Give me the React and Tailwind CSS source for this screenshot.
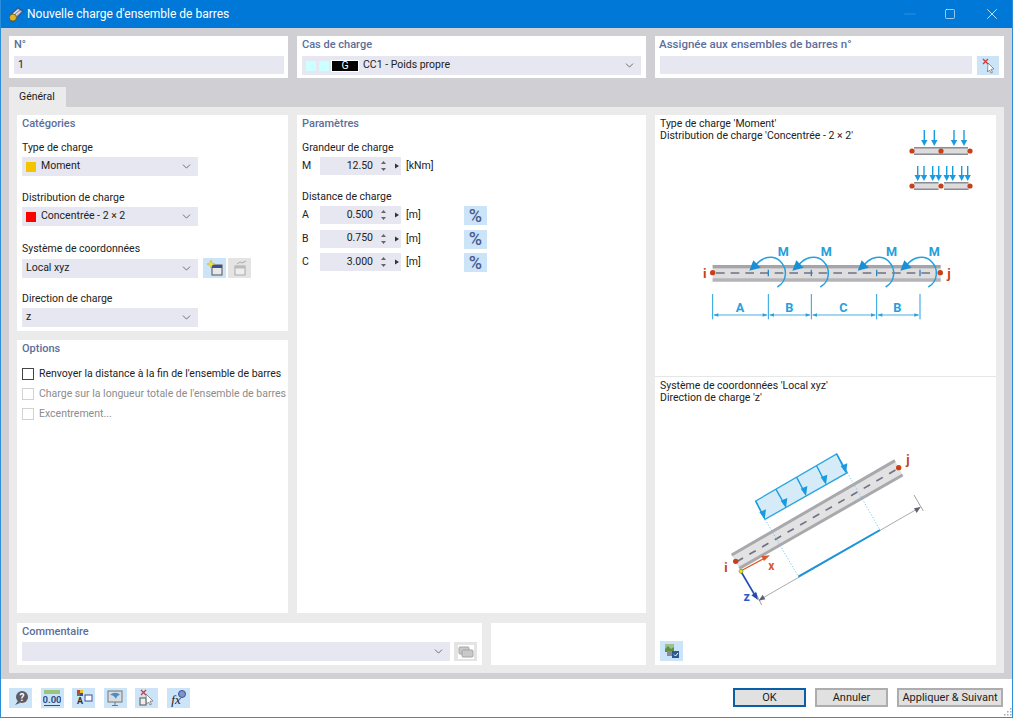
import React from "react";
import { ChevronDown, Minus, Square, X } from "lucide-react";

const Caption = ({ children }) => (
  <div className="h-[17px] leading-[17px] text-[11px] font-medium text-[#5b6e9c]">{children}</div>
);

const Field = ({ label, children, className = "" }) => (
  <div className={className}>
    <div className="h-[18px] leading-[18px] text-[#222]">{label}</div>
    {children}
  </div>
);

const Select = ({ swatch, children, className = "w-[176px]" }) => (
  <div className={`h-[19px] bg-[#e6e7f0] flex items-center pl-[4px] pr-[5px] ${className}`}>
    {swatch && <span className={`w-[10px] h-[10px] mr-[5px] ${swatch}`} />}
    <span className="flex-1 leading-none text-[#222] flex items-center">{children}</span>
    <ChevronDown size={13} strokeWidth={1.5} className="text-[#555]" />
  </div>
);

const Spin = ({ name, value, unit, percent }) => (
  <div className="h-[18px] flex items-start">
    <span className="w-[18px] h-[18px] leading-[18px] text-[#222]">{name}</span>
    <div className="w-[81px] h-[18px] bg-[#e6e7f0] flex items-center">
      <span className="w-[53px] text-right text-[#222]">{value}</span>
      <svg width="28" height="18" viewBox="3 0 28 18" className="shrink-0">
        <path d="M13.500 4 16 7h-5zM11 11h5l-2.500 3z" fill="#666" />
        <path d="M25 6.500 29 9l-4 2.500z" fill="#333" />
      </svg>
    </div>
    <span className="ml-[5px] w-[58px] h-[18px] leading-[18px] text-[#222]">{unit}</span>
    {percent && (
      <div className="w-[23px] h-[19px] bg-[#cce4f7] flex items-center justify-center text-[18px] font-medium text-[#4a5a95]">
        %
      </div>
    )}
  </div>
);

const Check = ({ children, off }) => (
  <div className="h-[20px] flex items-center whitespace-nowrap">
    <span className={`w-[12px] h-[12px] shrink-0 border bg-white mr-[5px] ${off ? "border-[#d2d2d2]" : "border-[#444]"}`} />
    <span className={off ? "text-[#8c8c8c]" : "text-[#222]"}>{children}</span>
  </div>
);

const Tool = ({ children, className = "w-[23px] h-[20px] bg-[#cce4f7]" }) => (
  <div className={`flex items-center justify-center shrink-0 ${className}`}>
    <svg width="18" height="18" viewBox="0 0 18 18">{children}</svg>
  </div>
);

const PressButton = ({ children, className = "border-[#adadad]" }) => (
  <div className={`h-[19px] flex items-center justify-center whitespace-nowrap text-[11px] bg-[#e1e1e1] border-2 text-[#222] ${className}`}>
    {children}
  </div>
);

const Arrow = ({ x, y1, y2 }) => (
  <>
    <line x1={x} y1={y1} x2={x} y2={y2 - 4} stroke="#1a9ae0" strokeWidth="1.400" />
    <path d={`M${x - 3.200} ${y2 - 6}h6.400l-3.200 6z`} fill="#1a9ae0" />
  </>
);

const MiniBar = ({ x, y, w }) => (
  <>
    <rect x={x} y={y} width={w} height="8" fill="#dcdcdc" />
    <rect x={x} y={y} width={w} height="1.500" fill="#8b8b94" />
    <rect x={x} y={y + 6.500} width={w} height="1.500" fill="#8b8b94" />
  </>
);

const MiniSchemes = () => (
  <svg width="75" height="70" viewBox="255 125 75 70" className="mt-[10px] mr-[16px] shrink-0">
    {[274.3, 284.3, 304, 314].map((x) => (
      <Arrow key={x} x={x} y1={130} y2={146} />
    ))}
    <MiniBar x={264} y={147} w={54} />
    {[262, 291, 320].map((x) => (
      <circle key={x} cx={x} cy={151} r="2.600" fill="#c8401a" />
    ))}
    {[267.7, 274, 282.7, 288.7, 296.7, 302.7, 311.7, 317.7].map((x) => (
      <Arrow key={x} x={x} y1={166} y2={181} />
    ))}
    <MiniBar x={264} y={182} w={24.500} />
    <MiniBar x={294} y={182} w={24.500} />
    {[262, 291, 320].map((x) => (
      <circle key={x} cx={x} cy={186} r="2.600" fill="#c8401a" />
    ))}
  </svg>
);

const BLUE = "#23a0dd";

const BeamMoment = () => {
  const arcs = [0, 129, 325, 453];
  const ticks = [235, 364, 560, 690];
  const dims = [68, 235, 364, 560, 690];
  return (
    <svg width="280" height="110" viewBox="0 0 840 330" className="ml-[35px] mt-[30px]">
      <rect x="68" y="120" width="684" height="50" fill="#dedede" />
      <rect x="68" y="120" width="684" height="10" fill="#a4a4aa" />
      <rect x="68" y="160" width="684" height="10" fill="#b4b4b8" />
      <line x1="78" y1="144" x2="742" y2="144" stroke="#6f7188" strokeWidth="5" strokeDasharray="26 18" />
      {ticks.map((x) => (
        <line key={x} x1={x} y1="134" x2={x} y2="154" stroke="#2a87c8" strokeWidth="4" />
      ))}
      <circle cx="68" cy="143" r="8" fill="#c8401a" />
      <circle cx="751" cy="143" r="8" fill="#c8401a" />
      <text x="44" y="158" textAnchor="middle" fontSize="40" fontWeight="700" fill="#c8401a">i</text>
      <text x="777" y="158" textAnchor="middle" fontSize="40" fontWeight="700" fill="#c8401a">j</text>
      {arcs.map((dx) => (
        <g key={dx} transform={`translate(${dx} 0)`}>
          <path d="M196 122C215 96 250 88 270 108C295 132 290 170 262 186" fill="none" stroke={BLUE} strokeWidth="4.500" />
          <path d="M178 137 190 106 212 128z" fill="#1a8fd6" />
          <text x="280" y="93" textAnchor="middle" fontSize="38" fontWeight="700" fill={BLUE}>M</text>
        </g>
      ))}
      {dims.map((x) => (
        <line key={x} x1={x} y1="207" x2={x} y2="283" stroke={BLUE} strokeWidth="3" />
      ))}
      {dims.slice(0, -1).map((x, i) => (
        <g key={x}>
          <line x1={x + 4} y1="270" x2={dims[i + 1] - 4} y2="270" stroke={BLUE} strokeWidth="2.500" />
          <path d={`M${x + 3} 270l14-5v10z`} fill={BLUE} />
          <path d={`M${dims[i + 1] - 3} 270l-14-5v10z`} fill={BLUE} />
        </g>
      ))}
      {[["A", 150], ["B", 298], ["C", 460], ["B", 622]].map(([t, x]) => (
        <text key={x} x={x} y="262" textAnchor="middle" fontSize="38" fontWeight="700" fill={BLUE}>{t}</text>
      ))}
    </svg>
  );
};

const BeamLocal = () => {
  const arrows = [
    [410, 42, 438, 100],
    [350, 78, 378, 134],
    [290, 112, 318, 168],
    [228, 148, 258, 204],
    [167, 183, 194, 238],
  ];
  return (
    <svg width="240" height="180" viewBox="0 0 720 540" className="ml-[45px] mt-[36px] shrink-0">
      <polygon points="167,183 410,42 442,98 195,238" fill="#d5ebf8" stroke="#29a5e0" strokeWidth="4" />
      {arrows.map(([x1, y1, x2, y2]) => (
        <g key={x1}>
          <line x1={x1} y1={y1} x2={x2 - 4} y2={y2 - 10} stroke="#1a9ae0" strokeWidth="4" />
          <path d={`M${x2} ${y2}l-16-22 20-8z`} fill="#1a9ae0" />
        </g>
      ))}
      <polygon points="95,345 585,62 608,105 118,385" fill="#e2e2e2" />
      <line x1="95" y1="345" x2="585" y2="62" stroke="#a9a9ad" strokeWidth="9" />
      <line x1="118" y1="385" x2="608" y2="105" stroke="#a9a9ad" strokeWidth="9" />
      <line x1="110" y1="365" x2="590" y2="88" stroke="#6f7188" strokeWidth="5" strokeDasharray="22 22" />
      <line x1="195" y1="238" x2="295" y2="410" stroke="#6cc0ea" strokeWidth="2.500" strokeDasharray="4 5" />
      <line x1="442" y1="98" x2="540" y2="270" stroke="#6cc0ea" strokeWidth="2.500" strokeDasharray="4 5" />
      <line x1="178" y1="480" x2="660" y2="202" stroke="#aaaaae" strokeWidth="3" />
      <line x1="295" y1="410" x2="540" y2="270" stroke="#1a94da" strokeWidth="6" />
      <line x1="165" y1="455" x2="185" y2="495" stroke="#a0a0a5" strokeWidth="3" />
      <line x1="642" y1="165" x2="670" y2="213" stroke="#a0a0a5" strokeWidth="3" />
      <path d="M176 482l20-4-8-14zM662 201l-20 4 8 14z" fill="#5f6072" />
      <circle cx="107" cy="364" r="8" fill="#c8401a" />
      <circle cx="596" cy="83" r="8" fill="#c8401a" />
      <line x1="122" y1="393" x2="195" y2="354" stroke="#d9582b" strokeWidth="4" />
      <path d="M210 346l-26 2 8 15z" fill="#d9582b" />
      <line x1="122" y1="393" x2="165" y2="466" stroke="#2247b8" strokeWidth="5" />
      <path d="M174 480l-20-14 15-9z" fill="#2247b8" />
      <circle cx="123" cy="394" r="6" fill="#e8e21e" stroke="#6b9c22" strokeWidth="2" />
      <text x="78" y="396" textAnchor="middle" fontSize="38" fontWeight="700" fill="#c8401a">i</text>
      <text x="624" y="72" textAnchor="middle" fontSize="38" fontWeight="700" fill="#c8401a">j</text>
      <text x="214" y="390" textAnchor="middle" fontSize="36" fontWeight="700" fill="#d9582b">x</text>
      <text x="140" y="482" textAnchor="middle" fontSize="38" fontWeight="700" fill="#2f5bc8">z</text>
    </svg>
  );
};

export default function App() {
  return (
    <div
      className="w-[1013px] h-[718px] flex flex-col bg-white border border-t-0 border-[#2b8edb] overflow-hidden text-[10.500px] leading-none"
      style={{ fontFamily: 'Roboto, "Noto Sans", sans-serif' }}
    >
      {/* barre de titre */}
      <div className="h-[28px] shrink-0 bg-[#0078d7] flex items-center text-white">
        <svg width="16" height="16" viewBox="0 0 18 18" className="ml-[7px] mr-[3px]">
          <path d="M3 10 11 2l6 4-8 8z" fill="#8d97b5" stroke="#2f3a60" strokeWidth="1" />
          <path d="M6 9l6-5M8 11l6-5" stroke="#e6e9f2" strokeWidth="1.200" />
          <circle cx="5.500" cy="13" r="4" fill="#e3b32a" stroke="#5a4a10" strokeWidth="0.800" />
        </svg>
        <span className="text-[12px] flex-1">Nouvelle charge d'ensemble de barres</span>
        <Minus size={18} strokeWidth={1} className="text-[#3f9ae3] mr-[25.500px]" />
        <Square size={12} strokeWidth={1.200} className="mr-[26.500px]" />
        <X size={18} strokeWidth={1} className="mr-[11.500px]" />
      </div>

      <div className="h-[651px] shrink-0 bg-[#d0d0d4] px-[8px] pt-[8px]">
        {/* ligne du haut */}
        <div className="flex gap-[9px] h-[42px]">
          <div className="w-[279px] bg-white pl-[5px] pr-[4px]">
            <Caption>N°</Caption>
            <div className="h-[18px] mt-[3px] bg-[#e6e7f0] flex items-center pl-[4px] text-[#222]">1</div>
          </div>
          <div className="w-[349px] bg-white px-[5px]">
            <Caption>Cas de charge</Caption>
            <div className="h-[19px] mt-[3px] bg-[#e6e7f0] flex items-center pl-[4px] pr-[5px]">
              <span className="w-[10px] h-[10px] bg-[#ccffff]" />
              <span className="w-[10px] h-[10px] bg-[#ccffff] ml-[3px]" />
              <span className="w-[28px] h-[12px] bg-black border border-white text-white text-center leading-[10px] ml-[2px]">G</span>
              <span className="flex-1 ml-[4px] text-[#222]">CC1 - Poids propre</span>
              <ChevronDown size={13} strokeWidth={1.500} className="text-[#555]" />
            </div>
          </div>
          <div className="w-[349px] bg-white pl-[4px] pr-[5px]">
            <Caption><span className="text-[11.500px]">Assignée aux ensembles de barres n°</span></Caption>
            <div className="flex mt-[3px] gap-[5px] pl-[1px]">
              <div className="w-[312px] h-[18px] bg-[#e6e7f0]" />
              <Tool className="w-[22px] h-[19px] bg-[#cce4f7]">
                <path d="M9 6l6 6-3 .3 1.500 3-1.500.7-1.500-3-2 2z" fill="#fff" stroke="#777" strokeWidth="0.800" />
                <path d="M4 2l5 5M9 2 4 7" stroke="#d23a3a" strokeWidth="1.300" />
              </Tool>
            </div>
          </div>
        </div>

        {/* onglet */}
        <div className="mt-[9px] w-[57px] h-[20px] bg-[#ebebeb] flex items-center pl-[10px] text-[#222]">Général</div>

        <div className="w-[995px] h-[566px] bg-[#ebebeb] p-[8px] flex gap-[9px]">
          <div className="w-[629px] flex flex-col">
            <div className="h-[498px] flex gap-[9px]">
              <div className="w-[271px] flex flex-col gap-[9px]">
                <div className="h-[216px] bg-white px-[5px]">
                  <Caption>Catégories</Caption>
                  <Field label="Type de charge" className="mt-[7px]">
                    <Select swatch="bg-[#f5c400]">Moment</Select>
                  </Field>
                  <Field label="Distribution de charge" className="mt-[13px]">
                    <Select swatch="bg-[#ff0000]">Concentrée - 2 × 2</Select>
                  </Field>
                  <Field label="Système de coordonnées" className="mt-[14px]">
                    <div className="flex items-center">
                      <Select>Local xyz</Select>
                      <Tool className="w-[23px] h-[20px] bg-[#cce4f7] ml-[5px]">
                        <rect x="6" y="6" width="10" height="10" fill="#e8e8e8" stroke="#555" strokeWidth="1" />
                        <rect x="6" y="6" width="10" height="3" fill="#3b4f9a" />
                        <path d="M5 1l1.200 2.800L9 5 6.200 6.200 5 9 3.800 6.200 1 5l2.800-1.200z" fill="#f4e23c" stroke="#b59c1a" strokeWidth="0.400" />
                      </Tool>
                      <Tool className="w-[23px] h-[20px] ml-[2px] bg-[#e4e4e4]">
                        <rect x="4" y="7" width="10" height="9" fill="#eee" stroke="#aaa" strokeWidth="1" />
                        <rect x="4" y="7" width="10" height="2.500" fill="#bbb" />
                        <path d="M6 5l3-2 2 1 4-2" stroke="#aaa" strokeWidth="1" fill="none" />
                      </Tool>
                    </div>
                  </Field>
                  <Field label="Direction de charge" className="mt-[12px]">
                    <Select>z</Select>
                  </Field>
                </div>
                <div className="flex-1 bg-white px-[5px]">
                  <Caption>Options</Caption>
                  <div className="mt-[7px]">
                    <Check>Renvoyer la distance à la fin de l'ensemble de barres</Check>
                    <Check off>Charge sur la longueur totale de l'ensemble de barres</Check>
                    <Check off>Excentrement...</Check>
                  </div>
                </div>
              </div>
              <div className="w-[349px] bg-white px-[5px]">
                <Caption>Paramètres</Caption>
                <Field label="Grandeur de charge" className="mt-[7px]">
                  <Spin name="M" value="12.50" unit="[kNm]" />
                </Field>
                <Field label="Distance de charge" className="mt-[13px]">
                  <div className="flex flex-col gap-[5.500px]">
                    <Spin name="A" value="0.500" unit="[m]" percent />
                    <Spin name="B" value="0.750" unit="[m]" percent />
                    <Spin name="C" value="3.000" unit="[m]" percent />
                  </div>
                </Field>
              </div>
            </div>
            <div className="mt-[10px] h-[42px] flex gap-[9px]">
              <div className="w-[465px] bg-white px-[5px]">
                <Caption>Commentaire</Caption>
                <div className="flex mt-[2px] gap-[4px]">
                  <Select className="flex-1" />
                  <div className="w-[23px] h-[19px] bg-[#e4e4e4] flex items-center justify-center">
                    <svg width="16" height="14" viewBox="0 0 16 14" className="bg-white">
                      <rect x="1" y="2" width="10" height="7" rx="1" fill="#c9c9c9" stroke="#a5a5a5" />
                      <rect x="4" y="5" width="11" height="7" rx="1" fill="#c9c9c9" stroke="#a5a5a5" />
                    </svg>
                  </div>
                </div>
              </div>
              <div className="w-[155px] bg-white" />
            </div>
          </div>

          {/* schémas */}
          <div className="w-[341px] bg-white flex flex-col">
            <div className="h-[262px] border-b border-[#e6e6e6]">
              <div className="flex justify-between h-[80px]">
                <div className="pl-[5px] pt-[3px] leading-[12px] text-[#222]">
                  <div>Type de charge 'Moment'</div>
                  <div>Distribution de charge 'Concentrée - 2 × 2'</div>
                </div>
                <MiniSchemes />
              </div>
              <BeamMoment />
            </div>
            <div className="flex-1 flex flex-col">
              <div className="pl-[5px] pt-[3px] leading-[12px] text-[#222]">
                <div>Système de coordonnées 'Local xyz'</div>
                <div>Direction de charge 'z'</div>
              </div>
              <BeamLocal />
              <Tool className="w-[23px] h-[20px] bg-[#cce4f7] ml-[5px] mt-auto mb-[4px]">
                <rect x="2" y="2" width="9" height="8" fill="#9fc08a" />
                <path d="M2 7l3-3 3 3 3-2v5H2z" fill="#5f8f3f" />
                <rect x="4" y="9" width="7" height="5" fill="#8a8a94" />
                <rect x="9" y="9" width="7" height="7" fill="#2e5a94" />
                <path d="M11 12.500l1.500 1.500 2.500-3" stroke="#fff" strokeWidth="1" fill="none" />
              </Tool>
            </div>
          </div>
        </div>
      </div>

      {/* barre du bas */}
      <div className="flex-1 relative flex items-start pt-[9px] pl-[8px]">
        <div className="flex gap-[8.600px]">
          <Tool>
            <circle cx="10" cy="8" r="6" fill="#5c5c66" />
            <path d="M6 12l-3 4 5-2z" fill="#5c5c66" />
            <text x="10" y="11.500" textAnchor="middle" fontSize="10" fontWeight="700" fill="#fff">?</text>
          </Tool>
          <Tool>
            <rect x="1" y="1" width="16" height="4" fill="#9cc27e" />
            <text x="9" y="14" textAnchor="middle" fontSize="9.500" fontWeight="700" fill="#2f4f86">0.00</text>
            <line x1="1" y1="16.500" x2="17" y2="16.500" stroke="#2f4f86" strokeWidth="1" />
          </Tool>
          <Tool>
            <rect x="2" y="1" width="3" height="3" fill="#d23a3a" />
            <rect x="5" y="1" width="3" height="3" fill="#e6c52a" />
            <rect x="2" y="4" width="3" height="3" fill="#3a8f3a" />
            <rect x="5" y="4" width="3" height="3" fill="#3b4f9a" />
            <text x="5" y="14.500" textAnchor="middle" fontSize="9" fontWeight="700" fill="#333">A</text>
            <rect x="10" y="6" width="7" height="6" fill="#fff" stroke="#3b4f9a" strokeWidth="1" />
          </Tool>
          <Tool>
            <rect x="2" y="2" width="14" height="11" fill="#d9dbe2" stroke="#777" strokeWidth="1" />
            <path d="M4 6c3-3 8-3 10 0-2 0-3 1-4 4-1-2-3-4-6-4z" fill="#4a8fc4" />
            <path d="M9 13v3M6 16.500h6" stroke="#777" strokeWidth="1" />
          </Tool>
          <Tool>
            <path d="M3 1l5 5M8 1 3 6" stroke="#d23a3a" strokeWidth="1.300" />
            <rect x="2" y="9" width="6" height="7" fill="#eee" stroke="#555" strokeWidth="1" />
            <path d="M8 5l7 7-3 .3 1.500 3-1.500.7-1.500-3-2 2z" fill="#fff" stroke="#777" strokeWidth="0.800" />
          </Tool>
          <Tool>
            <text x="7" y="15" textAnchor="middle" fontSize="13" fontStyle="italic" fontFamily="Liberation Serif, serif" fill="#222">fx</text>
            <circle cx="13" cy="5" r="3.500" fill="#7f93c9" stroke="#3b4f9a" strokeWidth="1" />
          </Tool>
        </div>
        <div className="ml-auto mr-[9px] flex gap-[9px]">
          <PressButton className="w-[73px] border-[#0a5fa8]">OK</PressButton>
          <PressButton className="w-[73px] border-[#adadad]">Annuler</PressButton>
          <PressButton className="w-[106px] border-[#adadad]">Appliquer &amp; Suivant</PressButton>
        </div>
        <svg width="10" height="10" viewBox="0 0 10 10" className="absolute right-0 bottom-0">
          <path d="M8 1h1.500v1.500H8zM8 4h1.500v1.500H8zM8 7h1.500v1.500H8zM5 4h1.500v1.500H5zM5 7h1.500v1.500H5zM2 7h1.500v1.500H2z" fill="#a8a8a8" />
        </svg>
      </div>
    </div>
  );
}
